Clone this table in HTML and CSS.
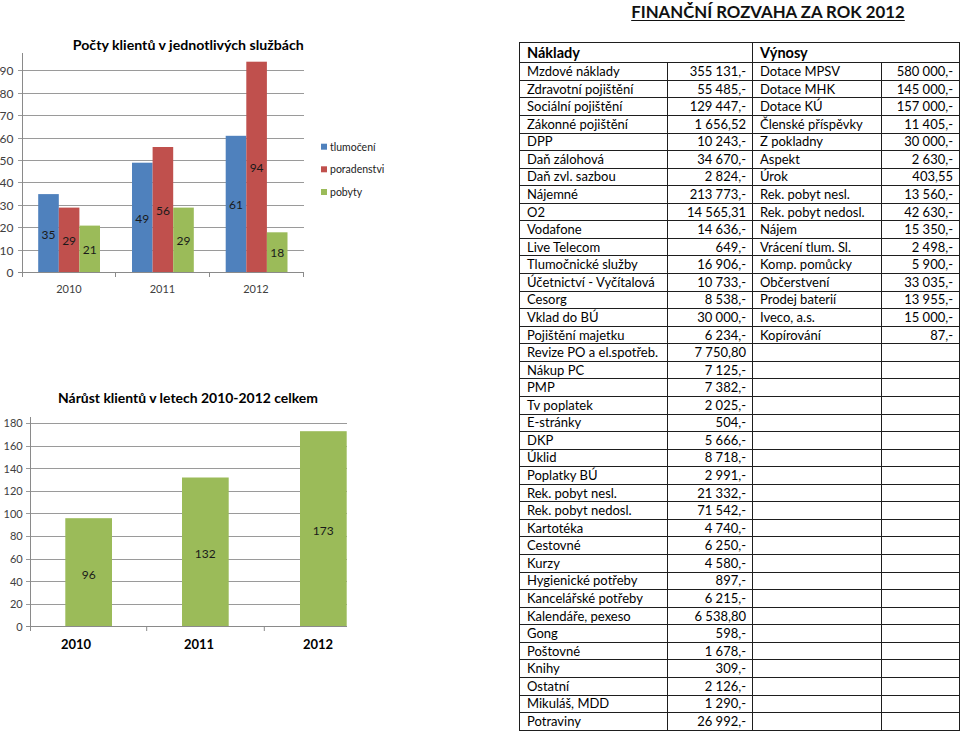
FILE: index.html
```html
<!DOCTYPE html>
<html lang="cs">
<head>
<meta charset="utf-8">
<title>Finanční rozvaha za rok 2012</title>
<link rel="stylesheet" href="styles.css">
</head>
<body>
<div class="page">
  <div class="charts">
    <svg class="chart" width="519" height="310" viewBox="0 0 519 310">
      <text class="chart-title" x="188.3" y="50" text-anchor="middle" textLength="231" lengthAdjust="spacingAndGlyphs">Počty klientů v jednotlivých službách</text>
      <g class="grid">
        <line x1="18" y1="70.5" x2="304" y2="70.5"/>
        <line x1="18" y1="93.5" x2="304" y2="93.5"/>
        <line x1="18" y1="115.5" x2="304" y2="115.5"/>
        <line x1="18" y1="138.5" x2="304" y2="138.5"/>
        <line x1="18" y1="160.5" x2="304" y2="160.5"/>
        <line x1="18" y1="182.5" x2="304" y2="182.5"/>
        <line x1="18" y1="205.5" x2="304" y2="205.5"/>
        <line x1="18" y1="227.5" x2="304" y2="227.5"/>
        <line x1="18" y1="250.5" x2="304" y2="250.5"/>
      </g>
      <g class="ylabels ylabels-lg">
        <text x="13.5" y="75">90</text>
        <text x="13.5" y="98">80</text>
        <text x="13.5" y="120">70</text>
        <text x="13.5" y="143">60</text>
        <text x="13.5" y="165">50</text>
        <text x="13.5" y="187">40</text>
        <text x="13.5" y="210">30</text>
        <text x="13.5" y="232">20</text>
        <text x="13.5" y="255">10</text>
        <text x="13.5" y="277">0</text>
      </g>
      <g class="bars">
        <rect class="blue" x="38.2" y="194.1" width="20.6" height="78.6"/>
        <rect class="red" x="58.8" y="207.6" width="20.6" height="65.1"/>
        <rect class="green" x="79.4" y="225.6" width="20.6" height="47.1"/>
        <rect class="blue" x="132" y="162.7" width="20.6" height="110"/>
        <rect class="red" x="152.6" y="147" width="20.6" height="125.7"/>
        <rect class="green" x="173.2" y="207.6" width="20.6" height="65.1"/>
        <rect class="blue" x="225.7" y="135.8" width="20.6" height="136.9"/>
        <rect class="red" x="246.3" y="61.7" width="20.6" height="211"/>
        <rect class="green" x="266.9" y="232.3" width="20.6" height="40.4"/>
      </g>
      <g class="axis">
        <line x1="22.5" y1="53" x2="22.5" y2="273"/>
        <line x1="18" y1="272.5" x2="304" y2="272.5"/>
        <line x1="115.5" y1="272.5" x2="115.5" y2="277"/>
        <line x1="209.5" y1="272.5" x2="209.5" y2="277"/>
        <line x1="303.5" y1="272.5" x2="303.5" y2="277"/>
        <line x1="22.5" y1="272.5" x2="22.5" y2="277"/>
      </g>
      <g class="values">
        <text x="48.5" y="238.5">35</text>
        <text x="69.1" y="245">29</text>
        <text x="89.7" y="254">21</text>
        <text x="142.3" y="222.5">49</text>
        <text x="162.9" y="215">56</text>
        <text x="183.5" y="245">29</text>
        <text x="236" y="209">61</text>
        <text x="256.6" y="172">94</text>
        <text x="277.2" y="256.5">18</text>
      </g>
      <g class="xlabels">
        <text x="69" y="293">2010</text>
        <text x="162.5" y="293">2011</text>
        <text x="256" y="293">2012</text>
      </g>
      <g class="legend">
        <rect class="blue" x="321" y="143.7" width="6" height="6"/>
        <text x="330" y="150.5">tlumočení</text>
        <rect class="red" x="321" y="166.3" width="6" height="6"/>
        <text x="330" y="173">poradenstvi</text>
        <rect class="green" x="321" y="189" width="6" height="6"/>
        <text x="330" y="196">pobyty</text>
      </g>
    </svg>
    <svg class="chart" width="519" height="421" viewBox="0 310 519 421">
      <text class="chart-title" x="188" y="403.3" text-anchor="middle" textLength="260" lengthAdjust="spacingAndGlyphs">Nárůst klientů v letech 2010-2012 celkem</text>
      <g class="grid">
        <line x1="26" y1="423.5" x2="347" y2="423.5"/>
        <line x1="26" y1="446.5" x2="347" y2="446.5"/>
        <line x1="26" y1="468.5" x2="347" y2="468.5"/>
        <line x1="26" y1="491.5" x2="347" y2="491.5"/>
        <line x1="26" y1="513.5" x2="347" y2="513.5"/>
        <line x1="26" y1="536.5" x2="347" y2="536.5"/>
        <line x1="26" y1="559.5" x2="347" y2="559.5"/>
        <line x1="26" y1="581.5" x2="347" y2="581.5"/>
        <line x1="26" y1="604.5" x2="347" y2="604.5"/>
      </g>
      <g class="ylabels">
        <text x="22.7" y="427.3">180</text>
        <text x="22.7" y="450">160</text>
        <text x="22.7" y="472.5">140</text>
        <text x="22.7" y="495.2">120</text>
        <text x="22.7" y="517.8">100</text>
        <text x="22.7" y="540.4">80</text>
        <text x="22.7" y="563">60</text>
        <text x="22.7" y="585.6">40</text>
        <text x="22.7" y="608.2">20</text>
        <text x="22.7" y="630.7">0</text>
      </g>
      <g class="bars">
        <rect class="green" x="65.3" y="518.2" width="46.7" height="108.5"/>
        <rect class="green" x="182" y="477.5" width="46.7" height="149.2"/>
        <rect class="green" x="300" y="431.2" width="46.7" height="195.5"/>
      </g>
      <g class="axis">
        <line x1="30.5" y1="417" x2="30.5" y2="627"/>
        <line x1="26" y1="626.5" x2="347" y2="626.5"/>
        <line x1="30.5" y1="626.5" x2="30.5" y2="631"/>
        <line x1="146.7" y1="626.5" x2="146.7" y2="631"/>
        <line x1="264.3" y1="626.5" x2="264.3" y2="631"/>
      </g>
      <g class="values">
        <text x="88.7" y="578.5">96</text>
        <text x="205.3" y="557.8">132</text>
        <text x="323.3" y="534.5">173</text>
      </g>
      <g class="xlabels-bold">
        <text x="76" y="649">2010</text>
        <text x="199" y="649">2011</text>
        <text x="318" y="649">2012</text>
      </g>
    </svg>
  </div>
  <div class="finance">
    <h1 class="title">FINANČNÍ ROZVAHA ZA ROK 2012</h1>
    <table class="balance">
      <colgroup>
        <col class="c-name">
        <col class="c-val">
        <col class="c-name2">
        <col class="c-val2">
      </colgroup>
      <tr class="head"><th colspan="2">Náklady</th><th colspan="2">Výnosy</th></tr>
      <tr><td>Mzdové náklady</td><td class="num">355 131,-</td><td>Dotace MPSV</td><td class="num">580 000,-</td></tr>
      <tr><td>Zdravotní pojištění</td><td class="num">55 485,-</td><td>Dotace MHK</td><td class="num">145 000,-</td></tr>
      <tr><td>Sociální pojištění</td><td class="num">129 447,-</td><td>Dotace KÚ</td><td class="num">157 000,-</td></tr>
      <tr><td>Zákonné pojištění</td><td class="num">1 656,52</td><td>Členské příspěvky</td><td class="num">11 405,-</td></tr>
      <tr><td>DPP</td><td class="num">10 243,-</td><td>Z pokladny</td><td class="num">30 000,-</td></tr>
      <tr><td>Daň zálohová</td><td class="num">34 670,-</td><td>Aspekt</td><td class="num">2 630,-</td></tr>
      <tr><td>Daň zvl. sazbou</td><td class="num">2 824,-</td><td>Úrok</td><td class="num">403,55</td></tr>
      <tr><td>Nájemné</td><td class="num">213 773,-</td><td>Rek. pobyt nesl.</td><td class="num">13 560,-</td></tr>
      <tr><td>O2</td><td class="num">14 565,31</td><td>Rek. pobyt nedosl.</td><td class="num">42 630,-</td></tr>
      <tr><td>Vodafone</td><td class="num">14 636,-</td><td>Nájem</td><td class="num">15 350,-</td></tr>
      <tr><td>Live Telecom</td><td class="num">649,-</td><td>Vrácení tlum. Sl.</td><td class="num">2 498,-</td></tr>
      <tr><td>Tlumočnické služby</td><td class="num">16 906,-</td><td>Komp. pomůcky</td><td class="num">5 900,-</td></tr>
      <tr><td>Účetnictví - Vyčítalová</td><td class="num">10 733,-</td><td>Občerstvení</td><td class="num">33 035,-</td></tr>
      <tr><td>Cesorg</td><td class="num">8 538,-</td><td>Prodej baterií</td><td class="num">13 955,-</td></tr>
      <tr><td>Vklad do BÚ</td><td class="num">30 000,-</td><td>Iveco, a.s.</td><td class="num">15 000,-</td></tr>
      <tr><td>Pojištění majetku</td><td class="num">6 234,-</td><td>Kopírování</td><td class="num">87,-</td></tr>
      <tr><td>Revize PO a el.spotřeb.</td><td class="num">7 750,80</td><td></td><td></td></tr>
      <tr><td>Nákup PC</td><td class="num">7 125,-</td><td></td><td></td></tr>
      <tr><td>PMP</td><td class="num">7 382,-</td><td></td><td></td></tr>
      <tr><td>Tv poplatek</td><td class="num">2 025,-</td><td></td><td></td></tr>
      <tr><td>E-stránky</td><td class="num">504,-</td><td></td><td></td></tr>
      <tr><td>DKP</td><td class="num">5 666,-</td><td></td><td></td></tr>
      <tr><td>Úklid</td><td class="num">8 718,-</td><td></td><td></td></tr>
      <tr><td>Poplatky BÚ</td><td class="num">2 991,-</td><td></td><td></td></tr>
      <tr><td>Rek. pobyt nesl.</td><td class="num">21 332,-</td><td></td><td></td></tr>
      <tr><td>Rek. pobyt nedosl.</td><td class="num">71 542,-</td><td></td><td></td></tr>
      <tr><td>Kartotéka</td><td class="num">4 740,-</td><td></td><td></td></tr>
      <tr><td>Cestovné</td><td class="num">6 250,-</td><td></td><td></td></tr>
      <tr><td>Kurzy</td><td class="num">4 580,-</td><td></td><td></td></tr>
      <tr><td>Hygienické potřeby</td><td class="num">897,-</td><td></td><td></td></tr>
      <tr><td>Kancelářské potřeby</td><td class="num">6 215,-</td><td></td><td></td></tr>
      <tr><td>Kalendáře, pexeso</td><td class="num">6 538,80</td><td></td><td></td></tr>
      <tr><td>Gong</td><td class="num">598,-</td><td></td><td></td></tr>
      <tr><td>Poštovné</td><td class="num">1 678,-</td><td></td><td></td></tr>
      <tr><td>Knihy</td><td class="num">309,-</td><td></td><td></td></tr>
      <tr><td>Ostatní</td><td class="num">2 126,-</td><td></td><td></td></tr>
      <tr><td>Mikuláš, MDD</td><td class="num">1 290,-</td><td></td><td></td></tr>
      <tr><td>Potraviny</td><td class="num">26 992,-</td><td></td><td></td></tr>
    </table>
  </div>
</div>
</body>
</html>
```

FILE: styles.css
```css
html, body {
  margin: 0;
  padding: 0;
  background: #ffffff;
}
body {
  width: 960px;
  height: 731px;
  overflow: hidden;
  font-family: Lato, "Open Sans", "Liberation Sans", sans-serif;
  color: #000;
}
.page {
  display: flex;
  align-items: flex-start;
}
.charts {
  width: 519px;
  flex: 0 0 519px;
  display: flex;
  flex-direction: column;
}
.chart {
  display: block;
  font-family: Lato, "Open Sans", sans-serif;
}
.chart-title {
  font-size: 14px;
  font-weight: 700;
  fill: #000;
}
.grid line {
  stroke: #9a9a9a;
  stroke-width: 1;
}
.axis line {
  stroke: #8a8a8a;
  stroke-width: 1;
}
.ylabels text {
  font-size: 11px;
  fill: #404040;
  text-anchor: end;
}
.ylabels-lg text {
  font-size: 12px;
}
.xlabels text {
  font-size: 11px;
  fill: #404040;
  text-anchor: middle;
}
.xlabels-bold text {
  font-size: 13px;
  font-weight: 700;
  fill: #000;
  text-anchor: middle;
}
.values text {
  font-size: 12px;
  fill: #1a1a1a;
  text-anchor: middle;
}
.legend text {
  font-size: 10.5px;
  fill: #222;
}
.blue { fill: #4f81bd; }
.red { fill: #c0504d; }
.green { fill: #9bbb59; }

.finance {
  flex: 0 0 441px;
  width: 441px;
}
.title {
  margin: 0;
  height: 41.7px;
  padding-left: 57px;
  box-sizing: border-box;
  text-align: center;
  font-size: 16.8px;
  line-height: 24px;
  font-weight: 700;
  text-decoration: underline;
  text-underline-offset: 2px;
  color: #111;
}
.balance {
  border-collapse: collapse;
  table-layout: fixed;
  width: 440px;
  font-size: 13px;
}
.c-name { width: 148px; }
.c-val { width: 85px; }
.c-name2 { width: 129px; }
.c-val2 { width: 78px; }
.balance td, .balance th {
  border: 1px solid #1e1e1e;
  padding: 0 6px 0 7px;
  white-space: nowrap;
  overflow: hidden;
  line-height: 15px;
  text-align: left;
  vertical-align: middle;
}
.balance tr {
  height: 17.57px;
}
.balance .head {
  height: 20.6px;
}
.balance th {
  font-size: 14.5px;
  font-weight: 700;
}
.balance .num {
  text-align: right;
}
```
